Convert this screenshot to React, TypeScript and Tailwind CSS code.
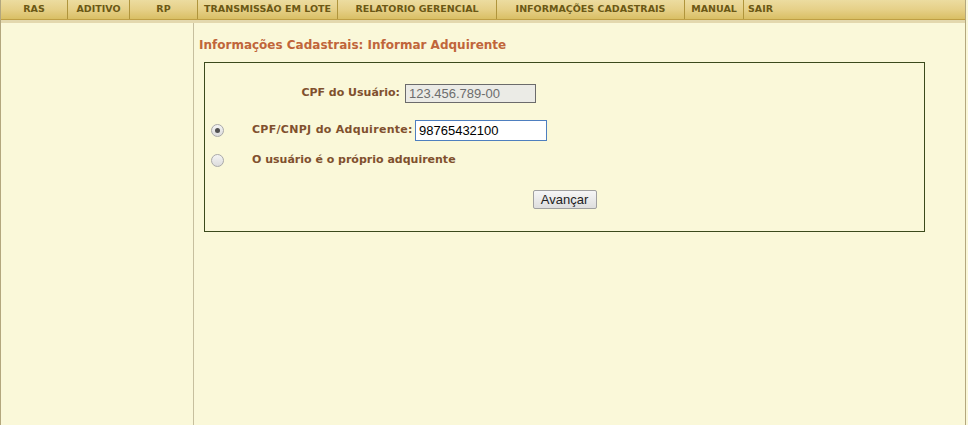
const menu = [
  { label: "RAS", w: "w-[67px]" },
  { label: "ADITIVO", w: "w-[62px]" },
  { label: "RP", w: "w-[68px]" },
  { label: "TRANSMISSÃO EM LOTE", w: "w-[140px]" },
  { label: "RELATORIO GERENCIAL", w: "w-[159px]" },
  { label: "INFORMAÇÕES CADASTRAIS", w: "w-[188px]" },
  { label: "MANUAL", w: "w-[59px]" },
];

function Radio({ checked }: { checked?: boolean }) {
  return (
    <span className="flex h-[13px] w-[13px] items-center justify-center rounded-full border border-[#a9a9a9] bg-gradient-to-b from-[#f4f4f4] to-[#dcdcdc]">
      {checked && <span className="h-[5px] w-[5px] rounded-full bg-[#505050]" />}
    </span>
  );
}

export default function App() {
  return (
    <div className="h-[425px] w-[968px] bg-[#faf8d9] font-['DejaVu_Sans',sans-serif]">
      <div className="flex h-full w-[966px] flex-col border-x border-[#b3a77e]">
        {/* top menu */}
        <div className="flex h-[20px] border-b border-[#bf9f44] bg-gradient-to-b from-[#ecdca0] via-[#e6d088] to-[#d9bf64] text-[9.5px] font-bold text-[#6b5815]">
          {menu.map((m) => (
            <div key={m.label} className={`${m.w} flex items-center justify-center border-r border-[#b0953c]`}>
              {m.label}
            </div>
          ))}
          <div className="flex items-center pl-[4px]">SAIR</div>
        </div>
        <div className="h-[3px] bg-[#e3d8ae]" />

        <div className="flex flex-1">
          <div className="w-[193px] border-r border-[#c6bf9e]" />

          <div className="flex-1 pl-[5px] pr-[40px] pt-[13px]">
            <h1 className="text-[12px] font-bold text-[#c0653a]">Informações Cadastrais: Informar Adquirente</h1>

            <div className="ml-[5px] mt-[8px] h-[170px] border border-[#3b4a1c] text-[11px] font-bold text-[#80502e]">
              <div className="mt-[21px] flex items-center">
                <div className="w-[195px] text-right">CPF do Usuário:</div>
                <div className="ml-[5px] flex h-[19px] w-[131px] items-center border border-[#6b6b6b] bg-[#ebebe6] pl-[3px] font-['Liberation_Sans',sans-serif] text-[13px] font-normal text-[#6d6d6d]">
                  123.456.789-00
                </div>
              </div>

              <div className="mt-[17px] flex items-center">
                <div className="ml-[6px] w-[41px]">
                  <Radio checked />
                </div>
                <div className="w-[163px] tracking-[0.3px]">CPF/CNPJ do Adquirente:</div>
                <div className="flex h-[21px] w-[132px] items-center border border-[#4e7fbf] bg-white pl-[3px] font-['Liberation_Sans',sans-serif] text-[13px] font-normal text-black">
                  98765432100
                </div>
              </div>

              <div className="mt-[11px] flex items-center">
                <div className="ml-[6px] w-[41px]">
                  <Radio />
                </div>
                <div>O usuário é o próprio adquirente</div>
              </div>

              <div className="mt-[21px] flex justify-center">
                <button className="h-[19px] w-[64px] rounded-[2px] border border-[#a0a0a0] bg-gradient-to-b from-[#f6f6f6] to-[#dedede] font-['Liberation_Sans',sans-serif] text-[13px] font-normal leading-none text-[#222]">
                  Avançar
                </button>
              </div>
            </div>
          </div>
        </div>
      </div>
    </div>
  );
}
